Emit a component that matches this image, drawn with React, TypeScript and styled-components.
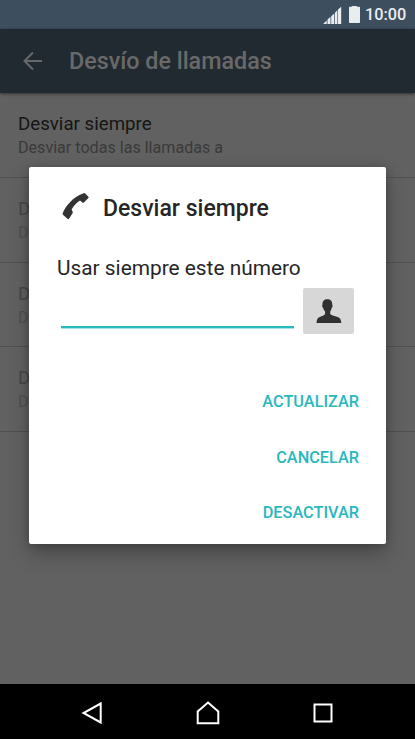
import React from "react";
import styled, { createGlobalStyle } from "styled-components";

const GlobalStyle = createGlobalStyle`
  * { box-sizing: border-box; }
  body { margin: 0; background: #000; font-family: Roboto, "Noto Sans", sans-serif; }
  button { font-family: inherit; border: 0; padding: 0; background: none; }
  svg { display: block; }
`;

const Phone = styled.div`
  position: relative;
  width: 415px;
  height: 739px;
  overflow: hidden;
  display: flex;
  flex-direction: column;
`;

const StatusBar = styled.div`
  flex: 0 0 28px;
  display: flex;
  align-items: center;
  justify-content: flex-end;
  padding-right: 10px;
  background: #3d4e5e;
  color: #e9edf0;
`;

const Clock = styled.span`
  width: 40px;
  margin-left: 5px;
  font-size: 16.3px;
  line-height: 28px;
  font-weight: 500;
  white-space: nowrap;
  padding-top: 1px;
`;

const AppBar = styled.header`
  flex: 0 0 64px;
  display: flex;
  align-items: center;
  padding: 0 0 1px 22px;
  background: #222a31;
  color: #69696a;
  box-shadow: 0 1px 3px rgba(0, 0, 0, 0.5);
  z-index: 1;
`;

const AppTitle = styled.h1`
  margin: 1px 0 0 26px;
  font-size: 23.3px;
  font-weight: 500;
  line-height: 30px;
`;

const List = styled.main`
  flex: 1;
  background: #616161;
`;

const Row = styled.div<{ $disabled?: boolean }>`
  height: 84.8px;
  padding: 20px 18px 0;
  border-bottom: 1px solid #505050;
  color: ${(p) => (p.$disabled ? "#474747" : "#151515")};
`;

const RowTitle = styled.div`
  font-size: 18.7px;
  line-height: 23px;
`;

const RowText = styled.div<{ $disabled?: boolean }>`
  font-size: 16.1px;
  line-height: 23px;
  color: ${(p) => (p.$disabled ? "#505050" : "#3a3a3a")};
`;

const NavBar = styled.nav`
  flex: 0 0 55px;
  display: flex;
  align-items: center;
  justify-content: space-between;
  padding: 3px 80px 0 80px;
  background: #000;
`;

const Dialog = styled.section`
  position: absolute;
  left: 29px;
  top: 167px;
  z-index: 2;
  width: 357px;
  height: 377px;
  padding: 24px 27px 0 28px;
  border-radius: 2px;
  background: #fff;
  color: #262626;
  box-shadow: 0 10px 20px rgba(0, 0, 0, 0.25), 0 1px 10px rgba(0, 0, 0, 0.2);
`;

const DialogHeader = styled.div`
  display: flex;
  align-items: center;
  height: 32px;
  padding-left: 4px;
`;

const DialogTitle = styled.h2`
  margin: 4px 0 0 12px;
  font-size: 23px;
  font-weight: 500;
  line-height: 32px;
`;

const Label = styled.label`
  display: block;
  margin-top: 30px;
  font-size: 20.85px;
  line-height: 30px;
  white-space: nowrap;
`;

const Field = styled.div`
  display: flex;
  height: 46px;
  margin-top: 5px;
  padding-left: 4px;
`;

const NumberInput = styled.input`
  width: 233px;
  height: 40px;
  border: 0;
  border-bottom: 2px solid #28bac2;
  box-shadow: 0 1px 0 #a5e0e4;
  padding: 0;
  outline: 0;
  font-size: 20px;
`;

const ContactButton = styled.button`
  display: flex;
  align-items: center;
  justify-content: center;
  width: 51px;
  height: 46px;
  margin-left: 9px;
  border-radius: 2px;
  background: #d7d7d7;
`;

const Actions = styled.div`
  display: flex;
  flex-direction: column;
  align-items: flex-end;
  margin-top: 40px;
`;

const Action = styled.button`
  height: 55.4px;
  color: #28b8be;
  font-size: 16.3px;
  font-weight: 500;
`;

const rows = [
  { title: "Desviar siempre", text: "Desviar todas las llamadas a" },
  { title: "D", text: "D", disabled: true },
  { title: "D", text: "D", disabled: true },
  { title: "D", text: "D", disabled: true },
];

export default function App() {
  return (
    <>
      <GlobalStyle />
      <Phone>
        <StatusBar>
          <svg width="37" height="20" viewBox="0 0 37 20" fill="currentColor">
            <path d="M.5 19v-.6l3.2-3V19zM4.500 19v-4.400l3-2.800V19zM8.200 19v-7.700l3-2.900V19zM11.900 19V7.700l2.500-2.500V19zM15 19V4.600L18.200 1.800V19z" />
            <path d="M26 2.500q0-.8.8-.8h2V.9h5v.8h2.400q.8 0 .8.800v14.700q0 .8-.8.800h-9.400q-.8 0-.8-.8z" />
          </svg>
          <Clock>10:00</Clock>
        </StatusBar>
        <AppBar>
          <svg width="21" height="20" viewBox="0 0 21 20" fill="none" stroke="currentColor" strokeWidth="2">
            <path d="M20 10H2.500M11 1.500L2.500 10 11 18.500" />
          </svg>
          <AppTitle>Desvío de llamadas</AppTitle>
        </AppBar>
        <List>
          {rows.map((row, i) => (
            <Row key={i} $disabled={row.disabled}>
              <RowTitle>{row.title}</RowTitle>
              <RowText $disabled={row.disabled}>{row.text}</RowText>
            </Row>
          ))}
        </List>
        <NavBar>
          <svg width="24" height="24" viewBox="0 0 24 24" fill="none" stroke="#fff" strokeWidth="2">
            <path d="M20.700 2.500v19L3.500 12z" />
          </svg>
          <svg width="26" height="26" viewBox="0 0 26 26" fill="none" stroke="#fff" strokeWidth="2">
            <path d="M13 2.500l10.300 9V23.300H2.700V11.500z" />
          </svg>
          <svg width="24" height="24" viewBox="0 0 24 24" fill="none" stroke="#fff" strokeWidth="2">
            <rect x="3.500" y="3.500" width="17" height="17" />
          </svg>
        </NavBar>
        <Dialog role="dialog" aria-label="Desviar siempre">
          <DialogHeader>
            <svg width="30" height="30" viewBox="0 0 30 30" fill="#333">
              <path d="M22 1.400q1.300-.7 2.200.1l3.200 3.300q.6.700 0 1.300l-4.500 4.300q-.7.600-1.400.1l-2.500-1.900C15.500 10.800 12.800 13.800 10.600 17.600l1.100 2.200q.3.600 0 1.200l-3.700 5.800q-.6.700-1.300.1l-4.700-4.200q-.6-.6-.3-1.400C4.500 13.500 12.200 5 22 1.400z" />
            </svg>
            <DialogTitle>Desviar siempre</DialogTitle>
          </DialogHeader>
          <Label htmlFor="number">Usar siempre este número</Label>
          <Field>
            <NumberInput id="number" />
            <ContactButton aria-label="Contactos">
              <svg width="26" height="26" viewBox="0 0 26 26" fill="#303030">
                <path d="M11.300 1.200c3.400 0 5.100 2 4.900 5.200.8.700.4 2.800-.5 3.300-.3 1.800-.8 2.800-1.500 3.700v2.600c1.500 1.600 4.500 1.900 7.300 2.900 2.600.9 3.600 2.400 3.800 6.100H.5c.2-3.700 1-5.200 3.300-6.100 2.400-1 4.300-1.300 5.300-2.900v-2.600C8.200 12.500 7.500 11.500 7.100 9.700 6.200 9.200 5.800 7.100 6.500 6.400 6.300 3.200 8 1.200 11.300 1.200z" />
              </svg>
            </ContactButton>
          </Field>
          <Actions>
            <Action>ACTUALIZAR</Action>
            <Action>CANCELAR</Action>
            <Action>DESACTIVAR</Action>
          </Actions>
        </Dialog>
      </Phone>
    </>
  );
}
